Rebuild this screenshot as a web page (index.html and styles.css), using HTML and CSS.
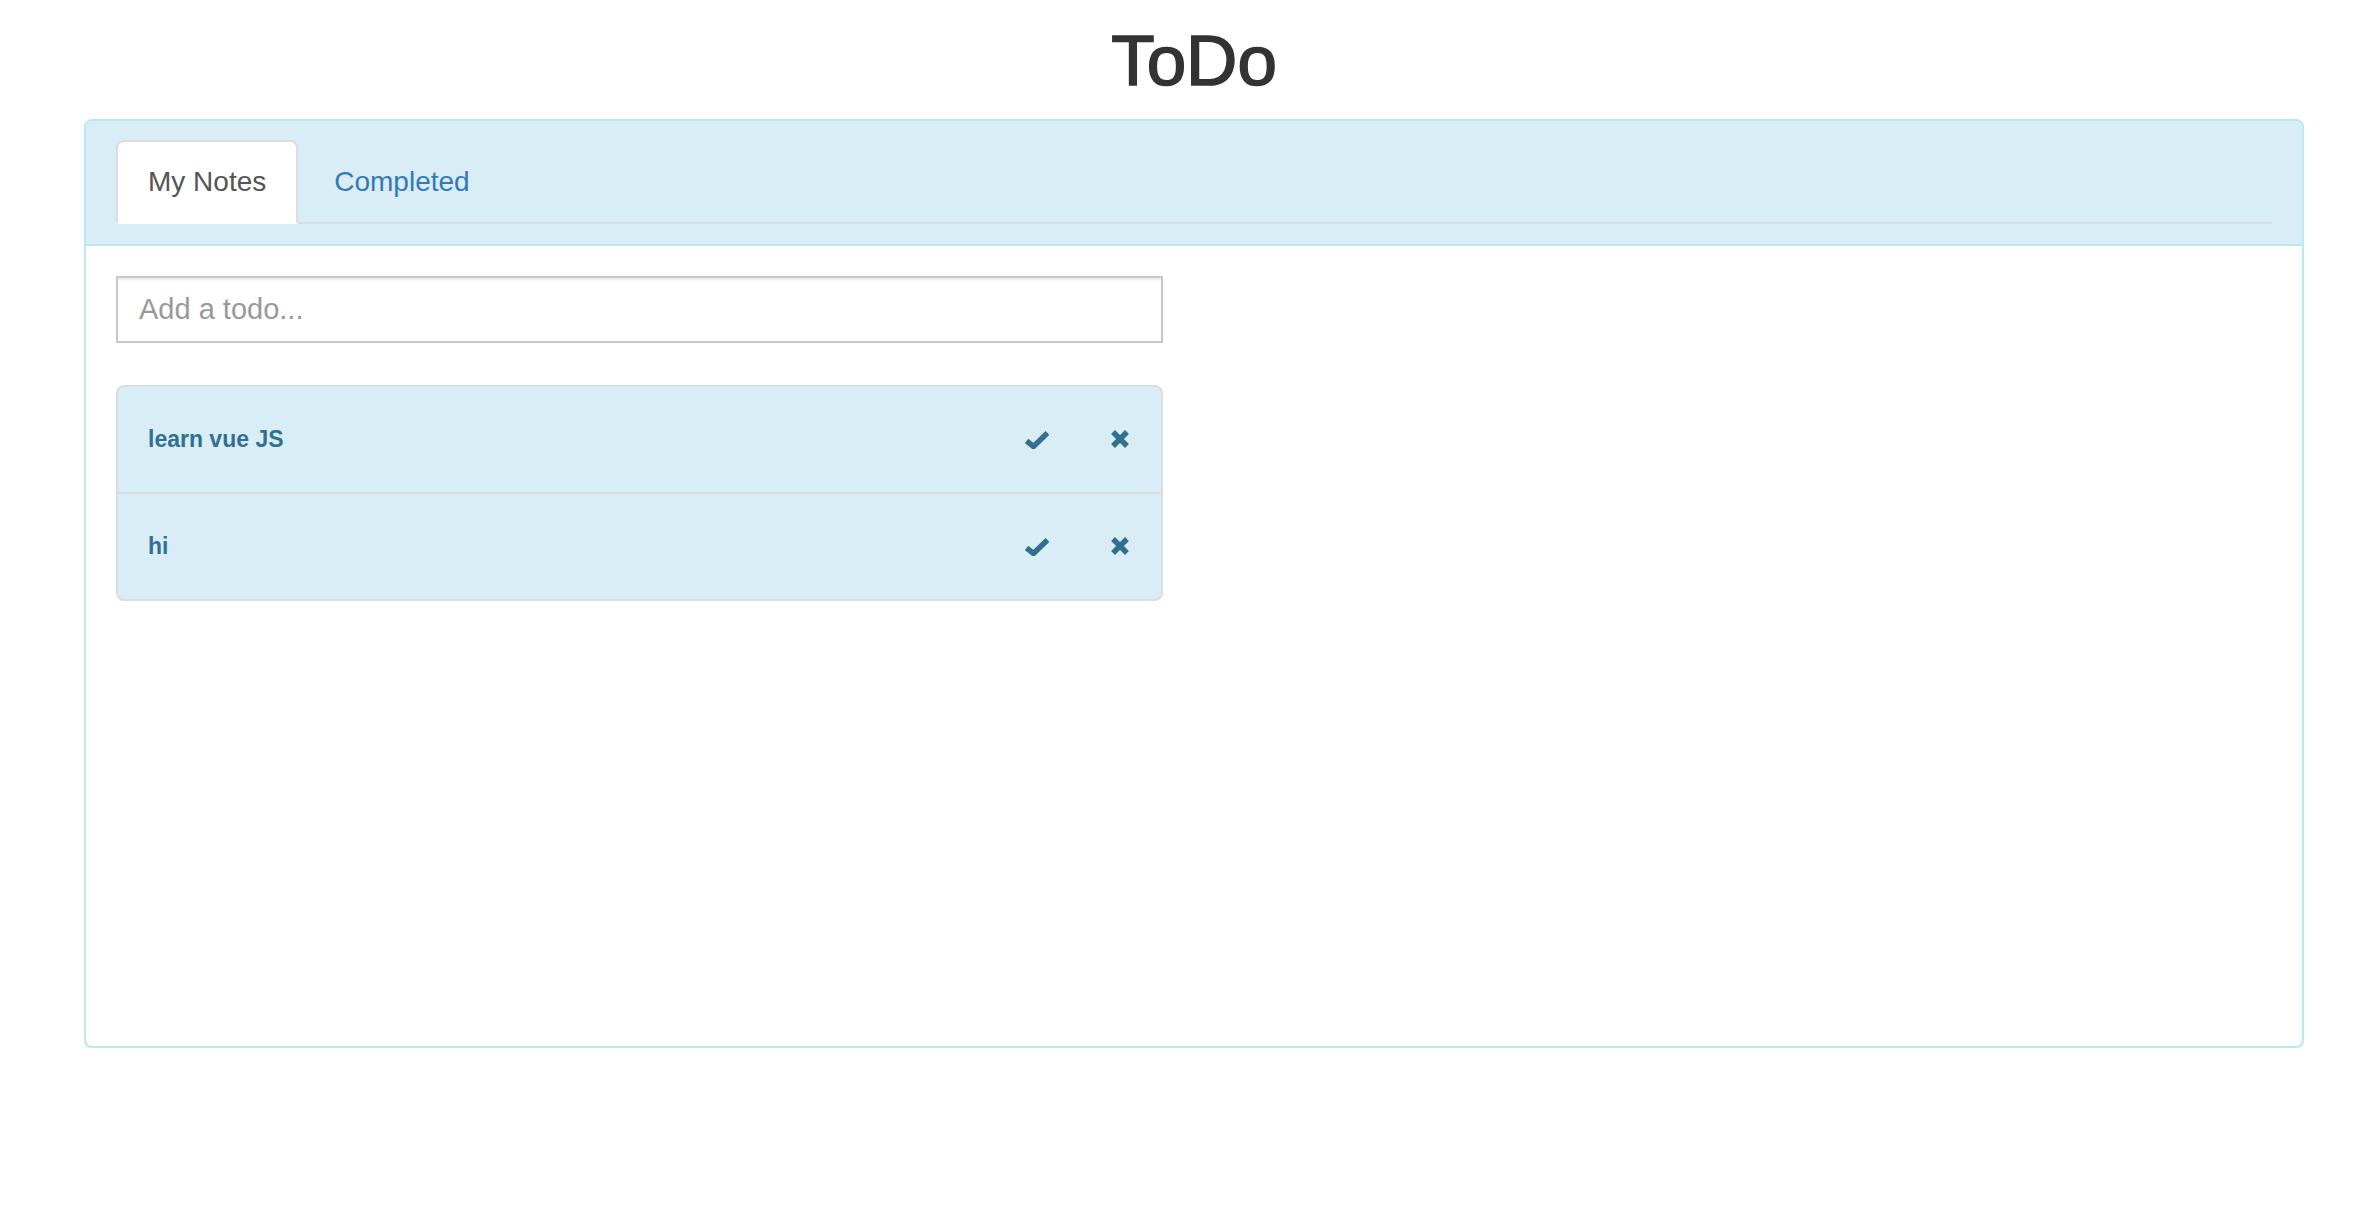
FILE: index.html
```html
<!DOCTYPE html>
<html lang="en">
<head>
<meta charset="utf-8">
<title>ToDo</title>
<link rel="stylesheet" href="styles.css">
</head>
<body>
<div class="wrap">
  <h1 class="title">ToDo</h1>
  <div class="panel">
    <div class="panel-heading">
      <ul class="tabs">
        <li class="tab active">My Notes</li>
        <li class="tab link">Completed</li>
      </ul>
    </div>
    <div class="panel-body">
      <input class="todo-input" type="text" placeholder="Add a todo...">
      <ul class="list">
        <li class="item">
          <span class="item-text">learn vue JS</span>
          <svg class="ic-ok" width="24" height="20" viewBox="0 0 24 20"><polyline points="1.5,12 8.5,17.5 22.5,4" fill="none" stroke="#31708f" stroke-width="5.5" stroke-linejoin="miter"/></svg>
          <svg class="ic-x" width="20" height="20" viewBox="0 0 20 20"><path d="M3 3 L17 17 M17 3 L3 17" stroke="#31708f" stroke-width="5.5" fill="none"/></svg>
        </li>
        <li class="item">
          <span class="item-text">hi</span>
          <svg class="ic-ok" width="24" height="20" viewBox="0 0 24 20"><polyline points="1.5,12 8.5,17.5 22.5,4" fill="none" stroke="#31708f" stroke-width="5.5" stroke-linejoin="miter"/></svg>
          <svg class="ic-x" width="20" height="20" viewBox="0 0 20 20"><path d="M3 3 L17 17 M17 3 L3 17" stroke="#31708f" stroke-width="5.5" fill="none"/></svg>
        </li>
      </ul>
    </div>
  </div>
</div>
</body>
</html>
```

FILE: styles.css
```css
html, body {
  margin: 0;
  padding: 0;
  background: #fff;
}
body {
  font-family: "Liberation Sans", Arial, Helvetica, sans-serif;
  color: #333;
}
.wrap {
  width: 2220px;
  margin-left: 84px;
}
.title {
  margin: 21px 0 19px;
  font-size: 71px;
  line-height: 79px;
  font-weight: 500;
  text-align: center;
  color: #333;
  -webkit-text-stroke: 1.6px #333;
}
.panel {
  box-sizing: border-box;
  height: 929px;
  border: 2px solid #bce8f1;
  border-radius: 8px;
  box-shadow: 0 2px 2px rgba(0, 0, 0, 0.05);
  overflow: hidden;
}
.panel-heading {
  background: #d9edf7;
  padding: 19px 30px 20px;
  border-bottom: 2px solid #bce8f1;
}
.tabs {
  list-style: none;
  margin: 0;
  padding: 0;
  display: flex;
  border-bottom: 2px solid #ddd;
}
.tab {
  padding: 20px 30px;
  font-size: 28px;
  line-height: 40px;
  margin-right: 4px;
  margin-bottom: -2px;
  border: 2px solid transparent;
  border-radius: 8px 8px 0 0;
}
.tab.active {
  background: #fff;
  color: #555;
  border-color: #ddd #ddd transparent #ddd;
}
.tab.link {
  color: #337ab7;
}
.panel-body {
  padding: 30px;
}
.todo-input {
  display: block;
  box-sizing: border-box;
  width: 1047px;
  height: 67px;
  margin: 0;
  padding: 0 21px;
  border: 2px solid #c8c8c8;
  border-radius: 0;
  box-shadow: inset 0 2px 2px rgba(0, 0, 0, 0.075);
  font-family: "Liberation Sans", Arial, Helvetica, sans-serif;
  font-size: 29px;
  color: #555;
  outline: none;
}
.todo-input::placeholder {
  color: #999;
}
.list {
  list-style: none;
  margin: 42px 0 0;
  padding: 0;
  width: 1047px;
  box-sizing: border-box;
  border: 2px solid #ddd;
  border-radius: 8px;
  overflow: hidden;
  background: #d9edf7;
}
.item {
  display: flex;
  align-items: center;
  height: 105px;
  padding: 0 31px 0 30px;
  color: #31708f;
}
.item + .item {
  border-top: 2px solid #ddd;
}
.item-text {
  flex: 1;
  font-size: 23px;
  font-weight: bold;
}
.ic-ok {
  display: block;
  margin-right: 61px;
  margin-top: -2px;
}
.ic-x {
  display: block;
  margin-top: -2px;
}
```
